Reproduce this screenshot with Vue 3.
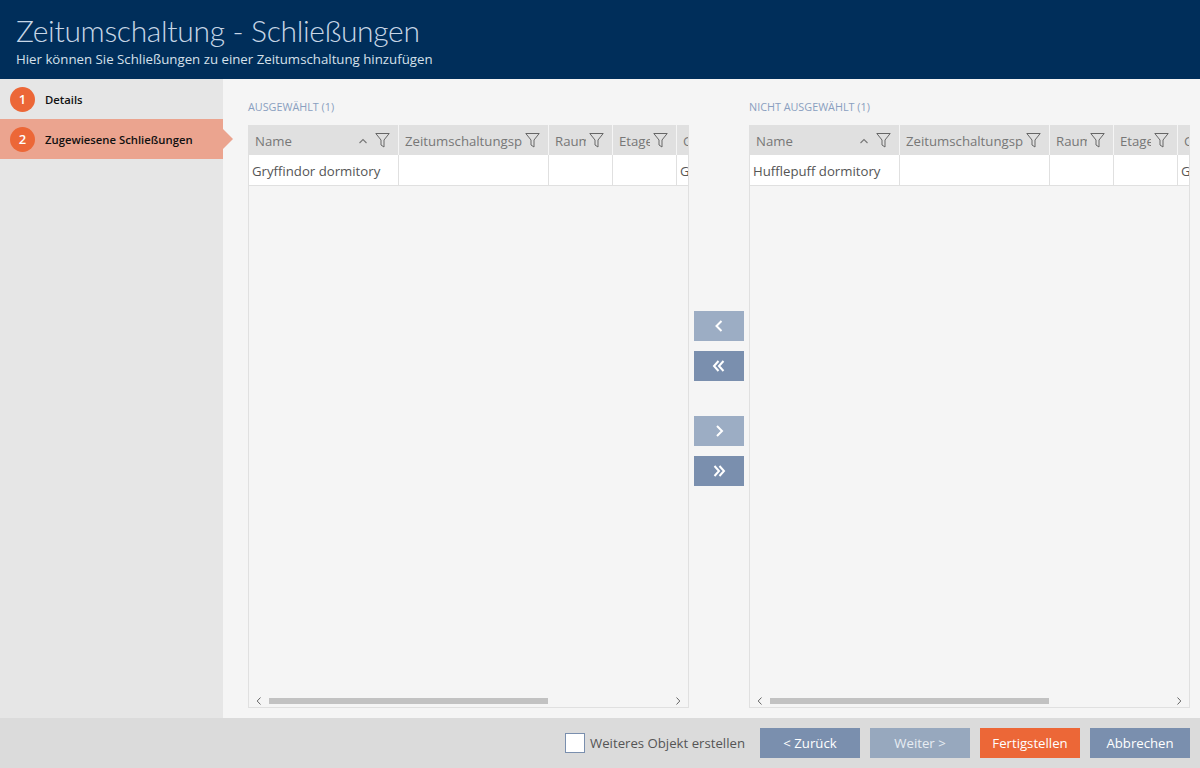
<template>
  <div class="page">
    <header class="top">
      <h1>Zeitumschaltung - Schließungen</h1>
      <p>Hier können Sie Schließungen zu einer Zeitumschaltung hinzufügen</p>
    </header>

    <div class="middle">
      <nav class="steps">
        <div v-for="(step, i) in steps" :key="step" class="step" :class="{ 'step--active': i === 1 }">
          <span class="step-num">{{ i + 1 }}</span>
          <span>{{ step }}</span>
        </div>
      </nav>

      <main class="content">
        <template v-for="(panel, p) in panels" :key="panel.title">
          <section class="panel">
            <div class="panel-title">{{ panel.title }}</div>
            <div class="grid">
              <div class="grid-row grid-head">
                <div v-for="col in columns" :key="col.label" class="cell" :class="col.cls">
                  <span class="cell-label">{{ col.label }}</span>
                  <svg v-if="col.sort" class="sort" width="10" height="6" viewBox="0 0 10 6">
                    <path d="M1.5 5 L5 1.5 L8.5 5" fill="none" stroke="#777" stroke-width="1.1" />
                  </svg>
                  <svg v-if="col.filter" class="filter" width="15" height="16" viewBox="0 0 15 16">
                    <path d="M.8 1.5 H14.2 L9 8 V15 L6 13 V8 Z" fill="none" stroke="#666" stroke-width="1" />
                  </svg>
                </div>
              </div>
              <div class="grid-row grid-item">
                <div class="cell cell--name">{{ panel.row }}</div>
                <div class="cell cell--plan"></div>
                <div class="cell cell--small"></div>
                <div class="cell cell--small"></div>
                <div class="cell cell--last">G</div>
              </div>
              <div class="grid-space"></div>
              <div class="scroller">
                <svg width="6" height="8" viewBox="0 0 6 8"><path d="M4.5 .5 L1.2 4 L4.5 7.5" fill="none" stroke="#666" /></svg>
                <div class="scroller-track"><div class="scroller-thumb"></div></div>
                <svg width="6" height="8" viewBox="0 0 6 8"><path d="M1.5 .5 L4.8 4 L1.5 7.5" fill="none" stroke="#666" /></svg>
              </div>
            </div>
          </section>

          <div v-if="p === 0" class="movers">
            <button class="mover mover--off" type="button">
              <svg width="12" height="12" viewBox="0 0 12 12"><path d="M8.5 1 L3.5 6 L8.5 11" class="chev" /></svg>
            </button>
            <button class="mover" type="button">
              <svg width="14" height="12" viewBox="0 0 14 12"><path d="M6.5 1 L2 6 L6.5 11 M11.5 1 L7 6 L11.5 11" class="chev" /></svg>
            </button>
            <button class="mover mover--off mover--split" type="button">
              <svg width="12" height="12" viewBox="0 0 12 12"><path d="M4 1 L9 6 L4 11" class="chev" /></svg>
            </button>
            <button class="mover" type="button">
              <svg width="14" height="12" viewBox="0 0 14 12"><path d="M2.5 1 L7 6 L2.5 11 M7.5 1 L12 6 L7.5 11" class="chev" /></svg>
            </button>
          </div>
        </template>
      </main>
    </div>

    <footer class="bottom">
      <label class="check"><span class="check-box"></span>Weiteres Objekt erstellen</label>
      <button class="btn" type="button">&lt; Zurück</button>
      <button class="btn btn--off" type="button">Weiter &gt;</button>
      <button class="btn btn--main" type="button">Fertigstellen</button>
      <button class="btn" type="button">Abbrechen</button>
    </footer>
  </div>
</template>

<script setup>
const steps = ["Details", "Zugewiesene Schließungen"];

const panels = [
  { title: "AUSGEWÄHLT (1)", row: "Gryffindor dormitory" },
  { title: "NICHT AUSGEWÄHLT (1)", row: "Hufflepuff dormitory" },
];

const columns = [
  { label: "Name", cls: "cell--name", sort: true, filter: true },
  { label: "Zeitumschaltungsplan", cls: "cell--plan", filter: true },
  { label: "Raum", cls: "cell--small", filter: true },
  { label: "Etage", cls: "cell--small", filter: true },
  { label: "Gebäude", cls: "cell--last" },
];
</script>

<style>
html,
body {
  margin: 0;
  background: #f5f5f5;
}
</style>

<style scoped>
.page {
  display: flex;
  flex-direction: column;
  height: 768px;
  overflow: hidden;
  font-family: "Open Sans", "Noto Sans", sans-serif;
  color: #555;
}

.top {
  height: 79px;
  box-sizing: border-box;
  padding: 12px 16px 0;
  background: #002e5a;
  color: #c7d6e6;
}

.top h1 {
  margin: 0 0 1px;
  font-family: Lato, "Open Sans", sans-serif;
  font-size: 30px;
  line-height: 37px;
  font-weight: 300;
  letter-spacing: -0.32px;
}

.top p {
  margin: 0;
  font-size: 13.25px;
  line-height: 19px;
  color: #d5e0ea;
}

.middle {
  flex: 1;
  display: flex;
  min-height: 0;
}

.steps {
  flex: none;
  width: 223px;
  background: #e6e6e6;
}

.step {
  position: relative;
  display: flex;
  align-items: center;
  gap: 10px;
  height: 40px;
  padding-left: 10px;
  font-size: 11.3px;
  font-weight: 600;
  color: #111;
  white-space: nowrap;
}

.step--active {
  background: #eba48f;
}

.step--active::after {
  content: "";
  position: absolute;
  left: 100%;
  top: 10px;
  border-left: 10px solid #eba48f;
  border-top: 10px solid transparent;
  border-bottom: 10px solid transparent;
}

.step-num {
  width: 25px;
  height: 25px;
  border-radius: 50%;
  background: #ec6737;
  color: #fff;
  font-size: 13px;
  line-height: 25px;
  text-align: center;
}

.content {
  flex: 1;
  min-width: 0;
  display: flex;
  padding: 0 10px 0 25px;
  background: #f5f5f5;
}

.panel {
  flex: 1;
  min-width: 0;
  display: flex;
  flex-direction: column;
  padding: 20px 0 10px;
}

.panel-title {
  height: 26px;
  line-height: 15px;
  font-size: 10.8px;
  color: #8a9fc0;
}

.grid {
  flex: 1;
  display: flex;
  flex-direction: column;
  min-height: 0;
  border: 1px solid #e0e0e0;
  border-top: 0;
  overflow: hidden;
}

.grid-row {
  display: flex;
  flex: none;
  height: 30px;
}

.grid-head {
  margin-left: -1px;
  background: #e0e0e0;
  color: #777;
}

.grid-item {
  background: #fff;
  border-bottom: 1px solid #e0e0e0;
  color: #555;
}

.cell {
  flex: none;
  display: flex;
  align-items: center;
  box-sizing: border-box;
  padding: 2px 3px 0;
  font-size: 13.2px;
  overflow: hidden;
  white-space: nowrap;
}

.grid-head .cell {
  padding: 2px 0 0 6px;
  border-right: 1px solid #f5f5f5;
}

.grid-head .cell--name {
  width: 151px;
  padding-left: 7px;
}

.grid-item .cell {
  border-right: 1px solid #e0e0e0;
}

.cell--name {
  width: 150px;
}

.cell--plan {
  width: 150px;
}

.cell--small {
  width: 64px;
}

.cell--last {
  width: 100px;
  border-right: 0 !important;
}

.cell-label {
  flex: 1;
  min-width: 0;
  overflow: hidden;
  margin-right: 3px;
}

.sort {
  margin-right: 7px;
}

.filter {
  flex: none;
  margin-right: 8px;
  margin-top: -2px;
}

.grid-space {
  flex: 1;
}

.scroller {
  display: flex;
  align-items: center;
  gap: 7px;
  height: 12px;
  padding: 0 7px;
}

.scroller svg {
  flex: none;
}

.scroller-track {
  flex: 1;
}

.scroller-thumb {
  width: 279px;
  height: 6px;
  background: #c2c2c2;
}

.movers {
  flex: none;
  width: 60px;
  display: flex;
  flex-direction: column;
  align-items: center;
  justify-content: center;
  gap: 10px;
}

.mover {
  display: flex;
  align-items: center;
  justify-content: center;
  width: 50px;
  height: 30px;
  padding: 0;
  border: 0;
  background: #7a8fae;
}

.mover--off {
  background: #9cadc4;
}

.mover--split {
  margin-top: 25px;
}

.chev {
  fill: none;
  stroke: #fff;
  stroke-width: 2;
}

.bottom {
  display: flex;
  align-items: center;
  justify-content: flex-end;
  gap: 10px;
  height: 50px;
  padding-right: 10px;
  background: #dbdbdb;
}

.check {
  display: flex;
  align-items: center;
  gap: 5px;
  font-size: 13.2px;
  color: #555;
  margin-right: 5px;
}

.check-box {
  width: 18px;
  height: 18px;
  background: #fff;
  border: 1px solid #7a8fae;
}

.btn {
  width: 100px;
  height: 30px;
  padding: 0;
  border: 0;
  background: #7a8fae;
  color: #fff;
  font-family: inherit;
  font-size: 13.2px;
}

.btn--off {
  background: #97a8be;
  color: #e8edf3;
}

.btn--main {
  background: #ec6737;
}
</style>
